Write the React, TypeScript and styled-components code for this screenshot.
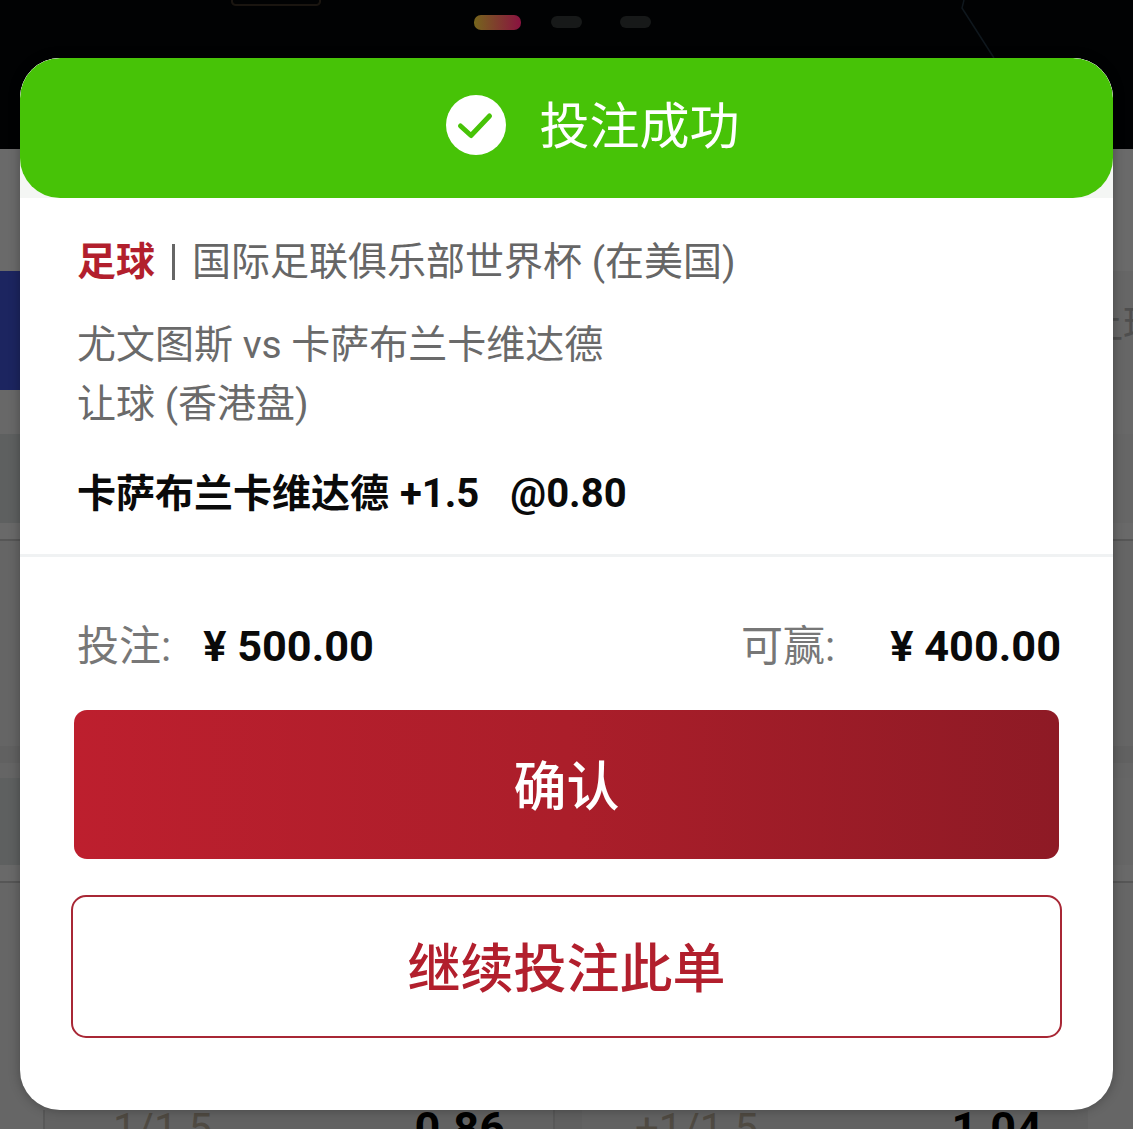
import React from "react";
import styled, { createGlobalStyle } from "styled-components";

const Global = createGlobalStyle`
  html, body { margin: 0; padding: 0; background: #666; }
  body { font-family: "Noto Sans CJK SC", "Noto Sans", sans-serif; }
`;

const CJK = `"Roboto", "Noto Sans CJK SC", sans-serif`;

const Page = styled.div`
  position: relative;
  width: 1133px;
  height: 1129px;
  overflow: hidden;
  background: #666;
`;

const Hero = styled.div`
  position: relative;
  height: 149px;
  background: #010203;
  display: flex;
  padding: 15px 0 0 474px;
  box-sizing: border-box;
`;

const HeroArt = styled.svg`
  position: absolute;
  left: 0;
  top: 0;
`;

const ActiveDot = styled.span`
  width: 47px;
  height: 15px;
  border-radius: 7px;
  background: linear-gradient(90deg, #75651c, #8a1240);
`;

const Dot = styled.span<{ $ml: number }>`
  width: 31px;
  height: 12px;
  margin: 1px 0 0 ${(p) => p.$ml}px;
  border-radius: 6px;
  background: #171919;
`;

const Band = styled.div<{ $h: number; $bg: string; $line?: boolean }>`
  height: ${(p) => p.$h}px;
  background: ${(p) => p.$bg};
  border-bottom: ${(p) => (p.$line ? "2px solid #565656" : "none")};
  box-sizing: border-box;
`;

const NavyBand = styled.div`
  height: 119px;
  background: linear-gradient(90deg, #1c2560 0 30px, #666 30px);
  display: flex;
  justify-content: flex-end;
  padding-bottom: 20px;
  box-sizing: border-box;
  align-items: center;
`;

const ClippedLabel = styled.span`
  margin-right: -28px;
  font-size: 38px;
  color: #4e4e4e;
  white-space: nowrap;
  font-family: ${CJK};
`;

const OddsRow = styled.div`
  position: absolute;
  left: 43px;
  right: 45px;
  bottom: 0;
  height: 19px;
  overflow: hidden;
  display: grid;
  grid-template-columns: 510px 508px;
  gap: 27px;
  background: #5f5f5f;
  border-left: 2px solid #585858;
  box-sizing: border-box;
`;

const OddsCell = styled.div<{ $pl: number; $pr: number }>`
  display: flex;
  justify-content: space-between;
  padding: 0 ${(p) => p.$pr}px 0 ${(p) => p.$pl}px;
  font-family: ${CJK};
  line-height: 38px;
  border-right: 2px solid #585858;
  background: #626262;
`;

const OddsLabel = styled.span`
  color: #4f4a42;
  font-size: 42px;
`;

const OddsValue = styled.span`
  color: #000;
  font-size: 45px;
  font-weight: 700;
`;

const Modal = styled.div`
  position: absolute;
  left: 20px;
  top: 58px;
  width: 1093px;
  height: 1052px;
  background: #fff;
  border-radius: 40px;
  box-shadow: 0 0 12px rgba(0, 0, 0, 0.3);
  overflow: hidden;
  font-family: ${CJK};
`;

const HeaderWrap = styled.div`
  background: #f4f6f4;
`;

const Header = styled.div`
  height: 140px;
  background: #47c307;
  border-radius: 40px;
  display: flex;
  align-items: center;
  justify-content: center;
  gap: 34px;
  padding-left: 52px;
  box-sizing: border-box;
  color: #fff;
  font-size: 50px;
  line-height: 1;
`;

const CheckBadge = styled.svg`
  margin-bottom: 6px;
`;

const HeaderTitle = styled.span`
  margin-bottom: 2px;
`;

const Info = styled.div`
  padding: 40px 57px 0;
  border-bottom: 3px solid #f0f2f3;
  height: 359px;
  box-sizing: border-box;
`;

const League = styled.div`
  display: flex;
  align-items: center;
  font-size: 39px;
  line-height: 48px;
  color: #666;
  white-space: nowrap;
`;

const Sport = styled.span`
  color: #b21f2d;
  font-weight: 700;
`;

const Sep = styled.span`
  width: 3px;
  height: 36px;
  background: #666;
  margin: 0 17px;
`;

const Match = styled.div`
  margin-top: 30px;
  font-size: 39px;
  line-height: 59px;
  color: #6a6a6a;
  white-space: nowrap;
`;

const Pick = styled.div`
  display: flex;
  margin-top: 35px;
  font-size: 39px;
  line-height: 50px;
  font-weight: 700;
  color: #0a0a0a;
  white-space: nowrap;
`;

const PickFigure = styled.span<{ $ml: number }>`
  margin-left: ${(p) => p.$ml}px;
  font-size: 40px;
`;

const Totals = styled.div`
  display: flex;
  justify-content: space-between;
  align-items: flex-start;
  padding: 62px 52px 0 57px;
  height: 153px;
  box-sizing: border-box;
  line-height: 56px;
`;

const Total = styled.div`
  display: flex;
  align-items: center;
`;

const TotalLabel = styled.span<{ $gap: number }>`
  font-size: 42px;
  color: #777;
  margin-right: ${(p) => p.$gap}px;
`;

const Amount = styled.span`
  font-size: 43.3px;
  font-weight: 700;
  color: #0a0a0a;
`;

const Confirm = styled.div`
  margin-left: 54px;
  width: 985px;
  height: 149px;
  border-radius: 13px;
  background: linear-gradient(90deg, #bd1f2e 0%, #ab1e2a 50%, #8e1a25 100%);
  color: #fff;
  font-size: 53px;
  font-weight: 500;
  display: flex;
  align-items: center;
  justify-content: center;
  padding-bottom: 4px;
  box-sizing: border-box;
`;

const Again = styled.div`
  margin: 36px 0 0 51px;
  width: 991px;
  height: 143px;
  box-sizing: border-box;
  border: 2px solid #a82735;
  border-radius: 15px;
  color: #b21f2d;
  font-size: 53px;
  font-weight: 500;
  display: flex;
  align-items: center;
  justify-content: center;
  padding-bottom: 4px;
`;

export default function App() {
  return (
    <Page>
      <Global />
      <Hero>
        <HeroArt width="1133" height="149" viewBox="0 0 1133 149">
          <path d="M232 0v2a4 4 0 0 0 4 3h80a4 4 0 0 0 4-3V0" fill="none" stroke="#1a1510" strokeWidth="2" />
          <path d="M964 0l-2 8 32 50" fill="none" stroke="#0f171d" strokeWidth="1.5" />
        </HeroArt>
        <ActiveDot />
        <Dot $ml={30} />
        <Dot $ml={38} />
      </Hero>
      <Band $h={122} $bg="#6a6a6a" />
      <NavyBand>
        <ClippedLabel>让球</ClippedLabel>
      </NavyBand>
      <Band $h={44} $bg="#686868" />
      <Band $h={89} $bg="linear-gradient(90deg, #5e6060 0 30px, #666 30px)" />
      <Band $h={18} $bg="#696969" $line />
      <Band $h={205} $bg="#656565" />
      <Band $h={17} $bg="#616161" />
      <Band $h={15} $bg="#656565" />
      <Band $h={87} $bg="linear-gradient(90deg, #5e6060 0 30px, #666 30px)" />
      <Band $h={18} $bg="#696969" $line />
      <OddsRow>
        <OddsCell $pl={68} $pr={48}>
          <OddsLabel>1/1.5</OddsLabel>
          <OddsValue>0.86</OddsValue>
        </OddsCell>
        <OddsCell $pl={53} $pr={46}>
          <OddsLabel>+1/1.5</OddsLabel>
          <OddsValue>1.04</OddsValue>
        </OddsCell>
      </OddsRow>
      <Modal>
        <HeaderWrap>
          <Header>
            <CheckBadge width="60" height="60" viewBox="0 0 60 60">
              <circle cx="30" cy="30" r="30" fill="#fff" />
              <path
                d="M14.5 31l10.5 9.5L43.5 21"
                fill="none"
                stroke="#47c307"
                strokeWidth="5"
                strokeLinecap="round"
                strokeLinejoin="round"
              />
            </CheckBadge>
            <HeaderTitle>投注成功</HeaderTitle>
          </Header>
        </HeaderWrap>
        <Info>
          <League>
            <Sport>足球</Sport>
            <Sep />
            国际足联俱乐部世界杯 (在美国)
          </League>
          <Match>
            尤文图斯 vs 卡萨布兰卡维达德
            <br />
            让球 (香港盘)
          </Match>
          <Pick>
            卡萨布兰卡维达德
            <PickFigure $ml={11}>+1.5</PickFigure>
            <PickFigure $ml={31}>@0.80</PickFigure>
          </Pick>
        </Info>
        <Totals>
          <Total>
            <TotalLabel $gap={32}>投注:</TotalLabel>
            <Amount>¥ 500.00</Amount>
          </Total>
          <Total>
            <TotalLabel $gap={55}>可赢:</TotalLabel>
            <Amount>¥ 400.00</Amount>
          </Total>
        </Totals>
        <Confirm>确认</Confirm>
        <Again>继续投注此单</Again>
      </Modal>
    </Page>
  );
}
